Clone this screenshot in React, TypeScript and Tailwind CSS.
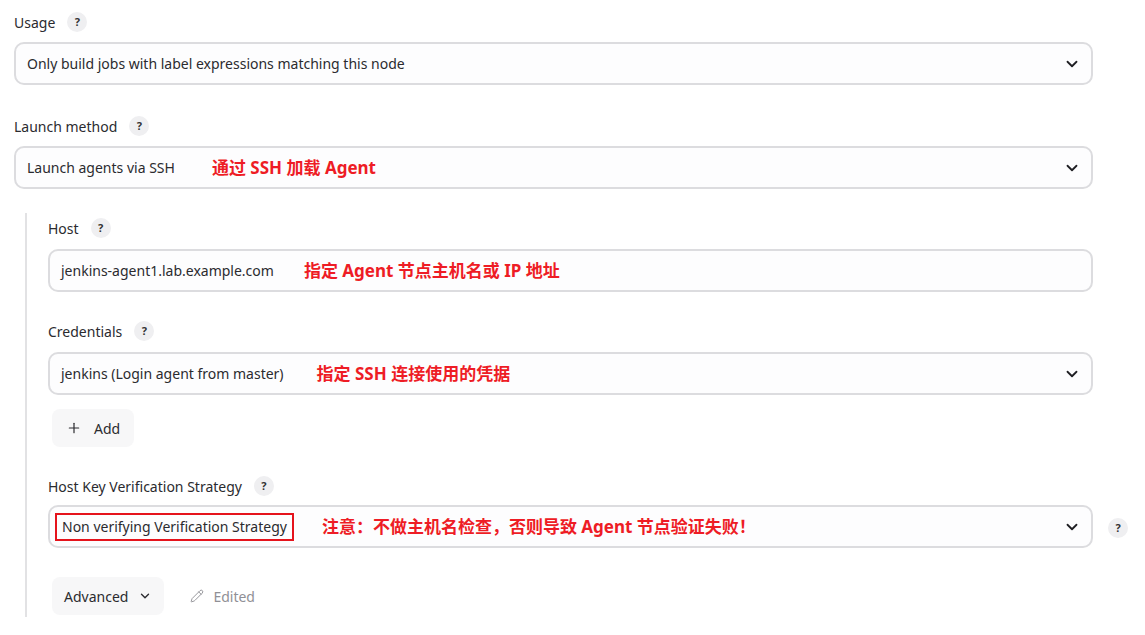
import { ChevronDown, Plus, Pencil } from "lucide-react"

function Help() {
  return (
    <span className="inline-flex h-[20px] w-[20px] items-center justify-center rounded-full bg-[#efeff1] text-[11px] font-bold text-[#333]">
      ?
    </span>
  )
}

function Label({ text }: { text: string }) {
  return (
    <div className="flex h-[20px] items-center gap-[12px] text-[14px] text-[#2b2b2f]">
      <span>{text}</span>
      <Help />
    </div>
  )
}

function Note({ children }: { children: React.ReactNode }) {
  return (
    <span className="font-['Noto_Sans','Noto_Sans_CJK_SC',sans-serif] text-[17px] font-bold text-[#ee1c25]">
      {children}
    </span>
  )
}

function Field({
  value,
  note,
  select = true,
  noteGap,
  boxed = false,
}: {
  value: string
  note: string
  select?: boolean
  noteGap: string
  boxed?: boolean
}) {
  return (
    <div className="flex h-[43px] items-center rounded-[10px] border-2 border-[#dcdcdf] bg-[#fdfdfe] pr-[10px] pl-[11px] text-[14px] text-[#2b2b2f]">
      {boxed ? (
        <span className="-ml-[6px] border-2 border-[#e5131c] px-[5px] leading-[24px]">{value}</span>
      ) : (
        <span>{value}</span>
      )}
      <span className={noteGap}>
        <Note>{note}</Note>
      </span>
      <span className="flex-1" />
      {select && <ChevronDown size={18} strokeWidth={2.4} className="text-[#1f1f23]" />}
    </div>
  )
}

export default function App() {
  return (
    <div className="min-h-[635px] w-[1145px] bg-white font-['Noto_Sans','Noto_Sans_CJK_SC',sans-serif]">
      <div className="w-[1093px] pt-[12px] pl-[14px]">
        <Label text="Usage" />
        <div className="mt-[10px]">
          <Field value="Only build jobs with label expressions matching this node" note="" noteGap="" />
        </div>

        <div className="mt-[31px]">
          <Label text="Launch method" />
        </div>
        <div className="mt-[10px]">
          <Field value="Launch agents via SSH" note="通过 SSH 加载 Agent" noteGap="ml-[37px]" />
        </div>

        <div className="mt-[24px] ml-[11px] border-l-2 border-[#e2e2e4] pl-[21px] pt-[5px]">
          <Label text="Host" />
          <div className="mt-[11px]">
            <Field
              value="jenkins-agent1.lab.example.com"
              note="指定 Agent 节点主机名或 IP 地址"
              select={false}
              noteGap="ml-[30px]"
            />
          </div>
          <div className="mt-[29px]">
            <Label text="Credentials" />
          </div>
          <div className="mt-[11px] pb-[14px]">
            <Field value="jenkins (Login agent from master)" note="指定 SSH 连接使用的凭据" noteGap="ml-[33px]" />
          </div>
        </div>

        <div className="ml-[11px] mt-[4px] border-l-2 border-[#e2e2e4] pl-[21px] pb-[2px]">
          <button className="flex h-[38px] items-center gap-[12px] rounded-[8px] bg-[#f7f7f8] px-[14px] text-[14px] text-[#2b2b2f] ml-[4px] -mt-[4px]">
            <Plus size={16} strokeWidth={1.8} />
            <span>Add</span>
          </button>

          <div className="mt-[29px]">
            <Label text="Host Key Verification Strategy" />
          </div>
          <div className="relative mt-[9px]">
            <Field
              value="Non verifying Verification Strategy"
              note="注意：不做主机名检查，否则导致 Agent 节点验证失败！"
              noteGap="ml-[28px]"
              boxed
            />
            <div className="absolute top-[9px] -right-[35px]">
              <Help />
            </div>
          </div>

          <div className="mt-[29px] flex items-center">
            <button className="ml-[4px] flex h-[38px] items-center gap-[10px] rounded-[8px] bg-[#f7f7f8] px-[12px] text-[14px] text-[#2b2b2f]">
              <span>Advanced</span>
              <ChevronDown size={14} strokeWidth={2.4} />
            </button>
            <div className="ml-[26px] flex items-center gap-[9px] text-[14px] text-[#909096]">
              <Pencil size={14} strokeWidth={1.6} />
              <span>Edited</span>
            </div>
          </div>
        </div>
      </div>
    </div>
  )
}
